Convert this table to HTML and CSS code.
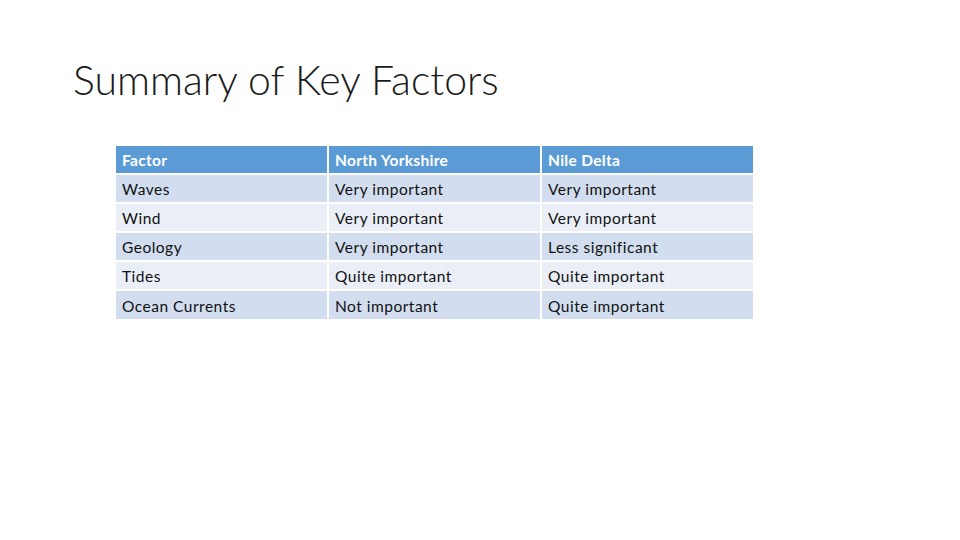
FILE: index.html
```html
<!DOCTYPE html>
<html>
<head>
<meta charset="utf-8">
<link rel="stylesheet" href="styles.css">
</head>
<body>
<div class="slide">
  <h1 class="title">Summary of Key Factors</h1>
  <table class="factors">
    <thead>
      <tr><th>Factor</th><th>North Yorkshire</th><th>Nile Delta</th></tr>
    </thead>
    <tbody>
      <tr class="odd"><td>Waves</td><td>Very important</td><td>Very important</td></tr>
      <tr class="even"><td>Wind</td><td>Very important</td><td>Very important</td></tr>
      <tr class="odd"><td>Geology</td><td>Very important</td><td>Less significant</td></tr>
      <tr class="even"><td>Tides</td><td>Quite important</td><td>Quite important</td></tr>
      <tr class="odd"><td>Ocean Currents</td><td>Not important</td><td>Quite important</td></tr>
    </tbody>
  </table>
</div>
</body>
</html>
```
FILE: styles.css
```css
html, body {
  margin: 0;
  padding: 0;
  background: #ffffff;
}
.slide {
  width: 960px;
  height: 540px;
  padding-top: 54px;
  box-sizing: border-box;
}
.title {
  margin: 0 0 0 73px;
  font-family: "Lato", "Open Sans", sans-serif;
  font-weight: 300;
  font-size: 41px;
  line-height: 52px;
  color: #1a1a1a;
}
.factors {
  margin: 38px 0 0 114px;
  border-collapse: separate;
  border-spacing: 2px;
  font-family: "Lato", "Open Sans", sans-serif;
  font-size: 15.5px;
  letter-spacing: 0.5px;
  color: #111111;
}
.factors th, .factors td {
  width: 211px;
  height: 27.1px;
  padding: 1px 0 0 6px;
  box-sizing: border-box;
  text-align: left;
  vertical-align: middle;
}
.factors th {
  background: #5b9bd5;
  color: #ffffff;
  font-weight: 700;
  letter-spacing: 0.3px;
}
.odd td { background: #d2deef; }
.even td { background: #eaeff7; }
```
